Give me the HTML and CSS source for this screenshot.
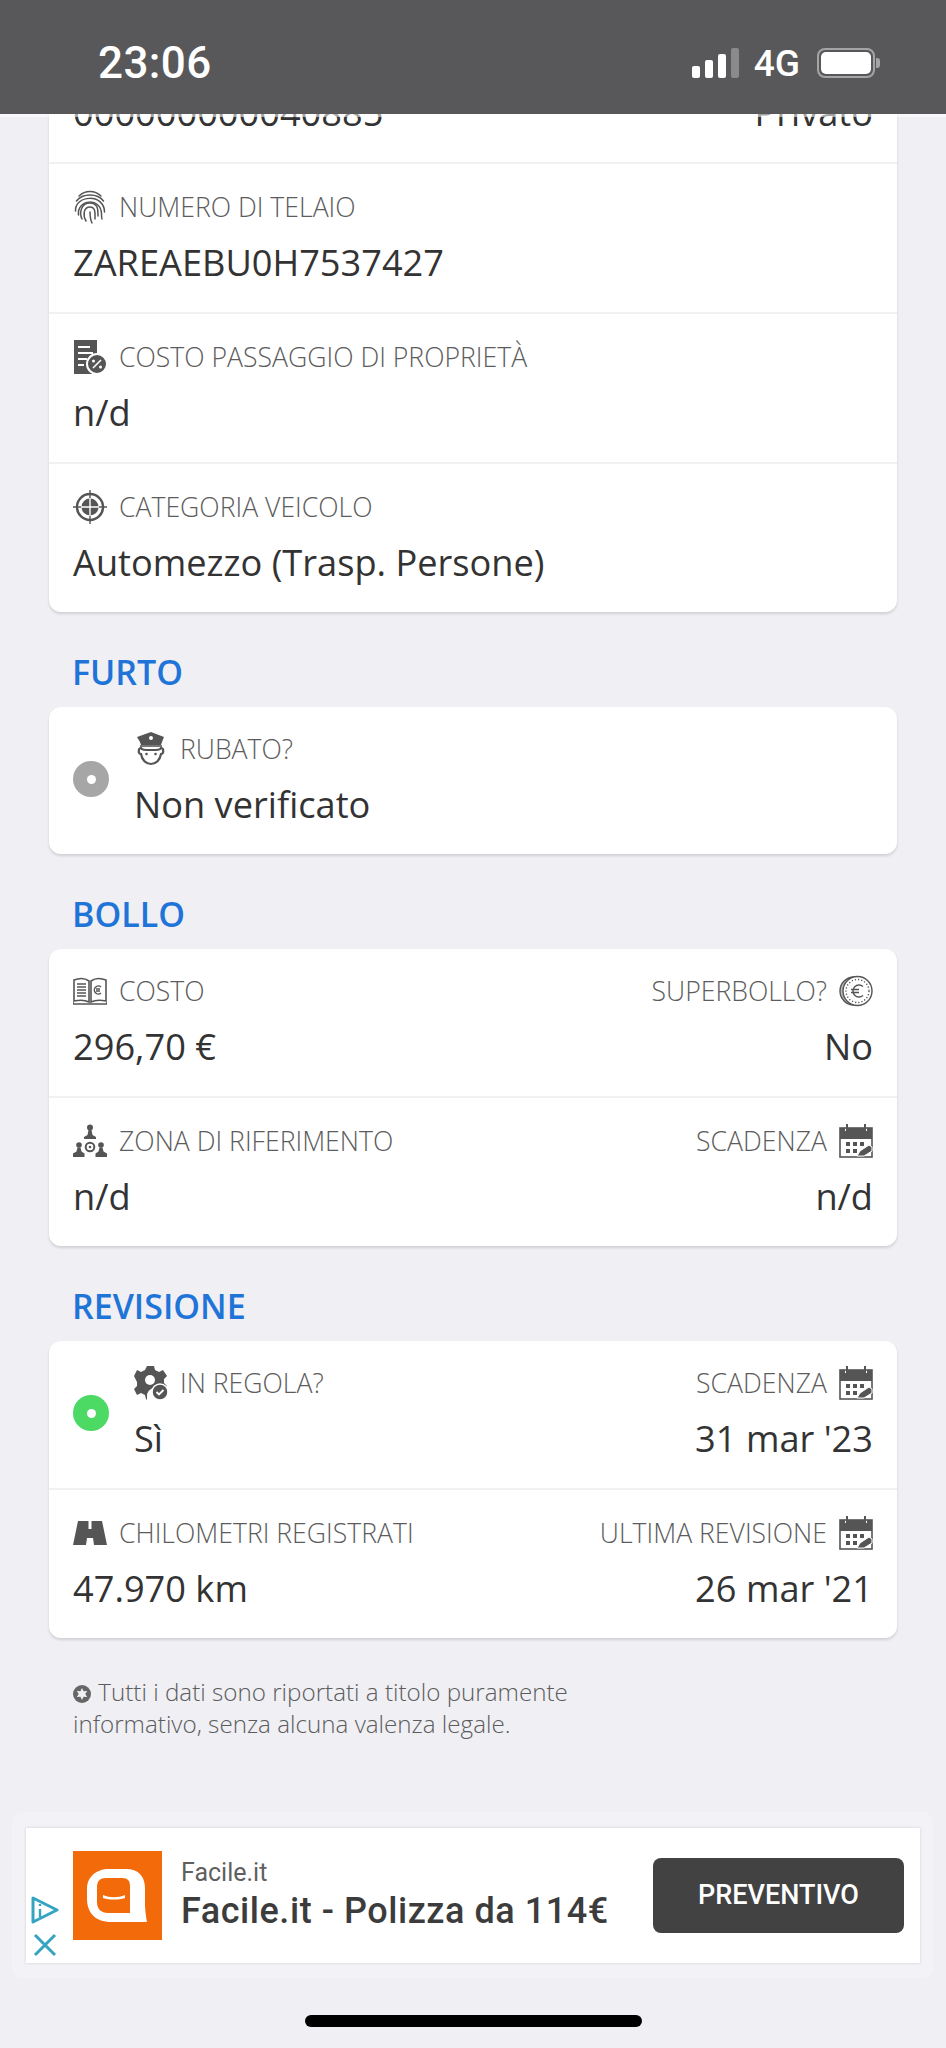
FILE: index.html
```html
<!DOCTYPE html>
<html lang="it">
<head>
<meta charset="utf-8">
<title>Dettagli veicolo</title>
<link rel="stylesheet" href="styles.css">
</head>
<body>
<svg class="defs" width="0" height="0" aria-hidden="true">
  <defs>
    <symbol id="cal" viewBox="0 0 34 34">
      <path d="M1 4h5v3h3V4h16v3h3V4h5v11H1z"/>
      <rect x="7" y="0" width="2" height="7"/><rect x="25" y="0" width="2" height="7"/>
      <rect x="1" y="4" width="32" height="29" fill="none" stroke="#555" stroke-width="1.6"/>
      <path d="M7 18h4v4H7zM14 18h4v4h-4zM21 18h4v4h-4zM7 25h4v4H7zM14 25h4v4h-4z"/>
      <path d="M18 32l3-5 9-6 3 2v4l-8 5z" fill="#555" stroke="#fff" stroke-width="1"/>
    </symbol>
  </defs>
</svg>

<header class="status">
  <span class="time">23:06</span>
  <div class="status-right">
    <div class="signal"><i class="b1"></i><i class="b2"></i><i class="b3"></i><i class="b4"></i></div>
    <span class="net">4G</span>
    <div class="battery"><i></i></div>
  </div>
</header>

<main class="page">
  <section class="card">
    <div class="row">
      <div class="cols">
        <div class="field"><div class="label">&nbsp;</div><div class="value">000000000040885</div></div>
        <div class="field end"><div class="label">&nbsp;</div><div class="value">Privato</div></div>
      </div>
    </div>
    <div class="row">
      <div class="field">
        <div class="label">
          <svg class="ico" viewBox="0 0 34 34"><g fill="none" stroke="#555" stroke-width="1.5" stroke-linecap="round"><path d="M6 6c6-6 16-6 22 0"/><path d="M3.500 11c6-8 21-8 27 0"/><path d="M2.500 21c-1-16 29-18 29 1"/><path d="M5.500 25c-2-16 23-18 23-1 0 3 0 4 .5 5"/><path d="M9 29c-3-6-1-16 8-16 9 0 8 9 8 13"/><path d="M13 31c-3-5-3-14 4-14 6 0 5 7 5 12"/><path d="M17 22c0 4 .5 8 2 11"/></g></svg>
          <span>NUMERO DI TELAIO</span>
        </div>
        <div class="value">ZAREAEBU0H7537427</div>
      </div>
    </div>
    <div class="row">
      <div class="field">
        <div class="label">
          <svg class="ico" viewBox="0 0 34 34"><path d="M1 0h23v34H1z"/><path d="M5 6h12v2H5zM5 12h15v2H5zM5 18h9v2H5zM5 24h6v2H5z" fill="#fff"/><circle cx="24" cy="24" r="10" fill="#555" stroke="#fff" stroke-width="2"/><path d="M20 28l8-8" stroke="#fff" stroke-width="1.600"/><circle cx="20.500" cy="21" r="1.500" fill="#fff"/><circle cx="27.500" cy="27" r="1.500" fill="#fff"/></svg>
          <span>COSTO PASSAGGIO DI PROPRIETÀ</span>
        </div>
        <div class="value">n/d</div>
      </div>
    </div>
    <div class="row">
      <div class="field">
        <div class="label">
          <svg class="ico" viewBox="0 0 34 34"><circle cx="17" cy="17" r="13" fill="none" stroke="#555" stroke-width="2.400"/><circle cx="17" cy="17" r="8.500"/><path d="M17 0v34M0 17h34" stroke="#555" stroke-width="1.400"/><path d="M17 8v18M8 17h18" stroke="#fff" stroke-width="1.400"/></svg>
          <span>CATEGORIA VEICOLO</span>
        </div>
        <div class="value">Automezzo (Trasp. Persone)</div>
      </div>
    </div>
  </section>

  <h2 class="title">FURTO</h2>
  <section class="card">
    <div class="row">
      <span class="dot grey"></span>
      <div class="field">
        <div class="label">
          <svg class="ico" viewBox="0 0 34 34"><path d="M17 0l13 5-2 5-1 3H7L6 10 3 5z"/><circle cx="17" cy="6" r="2" fill="#fff"/><path d="M6 14h22" stroke="#555" stroke-width="1.600"/><path d="M7 16c-3 0-3 6 0 6 1 6 5 10 10 10s9-4 10-10c3 0 3-6 0-6 -1 2-3 2-10 2s-9 0-10-2z" fill="none" stroke="#555" stroke-width="2.200"/><circle cx="12.500" cy="22" r="1.300"/><circle cx="21.500" cy="22" r="1.300"/></svg>
          <span>RUBATO?</span>
        </div>
        <div class="value">Non verificato</div>
      </div>
    </div>
  </section>

  <h2 class="title">BOLLO</h2>
  <section class="card">
    <div class="row">
      <div class="cols">
        <div class="field">
          <div class="label">
            <svg class="ico" viewBox="0 0 34 34"><path d="M1 6c5-2 11-2 15 1v21c-4-2-10-2-15-1zM18 7c4-3 10-3 15-1v21c-5-1-11-1-15 1z" fill="none" stroke="#555" stroke-width="1.600"/><path d="M4 10h9M4 13h9M4 16h9M4 19h9M4 22h9" stroke="#555" stroke-width="1.500"/><path d="M0 28v2h34v-2" fill="none" stroke="#555" stroke-width="1.600"/><path d="M28 13a4 4 0 1 0 0 6M23 15h4M23 17h4" fill="none" stroke="#555" stroke-width="1.500"/></svg>
            <span>COSTO</span>
          </div>
          <div class="value">296,70 €</div>
        </div>
        <div class="field end">
          <div class="label">
            <span>SUPERBOLLO?</span>
            <svg class="ico" viewBox="0 0 34 34"><circle cx="15" cy="17" r="14" fill="#bbb" stroke="#555" stroke-width="1.400"/><circle cx="18.500" cy="17" r="14.500" fill="#fff" stroke="#555" stroke-width="1.400"/><circle cx="18.500" cy="17" r="11.500" fill="none" stroke="#555" stroke-width="1.400" stroke-dasharray="1.200 2"/><path d="M24 12.500a6 6 0 1 0 0 9M12 15.500h8M12 18.500h8" fill="none" stroke="#555" stroke-width="1.400"/></svg>
          </div>
          <div class="value">No</div>
        </div>
      </div>
    </div>
    <div class="row">
      <div class="cols">
        <div class="field">
          <div class="label">
            <svg class="ico" viewBox="0 0 34 34"><circle cx="17" cy="3.500" r="3"/><path d="M15.500 6h3l1 5 3.500 2v2H11v-2l3.500-2z"/><circle cx="6" cy="21" r="2.800"/><path d="M4.500 23.500h3l1 4 3 2V33H0v-3.500l3.500-2z"/><circle cx="28" cy="21" r="2.800"/><path d="M26.500 23.500h3l1 4 3.500 2V33H22.500v-3.500l3-2z"/><circle cx="17" cy="23" r="4.300" fill="none" stroke="#555" stroke-width="2"/><circle cx="17" cy="23" r="1.300"/></svg>
            <span>ZONA DI RIFERIMENTO</span>
          </div>
          <div class="value">n/d</div>
        </div>
        <div class="field end">
          <div class="label">
            <span>SCADENZA</span>
            <svg class="ico"><use href="#cal"/></svg>
          </div>
          <div class="value">n/d</div>
        </div>
      </div>
    </div>
  </section>

  <h2 class="title">REVISIONE</h2>
  <section class="card">
    <div class="row">
      <span class="dot green"></span>
      <div class="cols">
        <div class="field">
          <div class="label">
            <svg class="ico" viewBox="0 0 34 34"><path d="M13 0h7l1 4 4 2 4-2 4 6-3 3v4l3 3-1 2H20a8 8 0 0 0-7 9v3l-1-1-1-4-4-2-4 2-3-6 3-3v-4L0 10l3-6 4 2 4-2z"/><circle cx="16" cy="14" r="5" fill="#fff"/><circle cx="26" cy="26" r="8" fill="#555" stroke="#fff" stroke-width="1.500"/><path d="M22.500 26l2.500 2.500 4.500-4.500" fill="none" stroke="#fff" stroke-width="1.800"/></svg>
            <span>IN REGOLA?</span>
          </div>
          <div class="value">Sì</div>
        </div>
        <div class="field end">
          <div class="label">
            <span>SCADENZA</span>
            <svg class="ico"><use href="#cal"/></svg>
          </div>
          <div class="value">31 mar '23</div>
        </div>
      </div>
    </div>
    <div class="row">
      <div class="cols">
        <div class="field">
          <div class="label">
            <svg class="ico" viewBox="0 0 34 34"><path d="M5 5h24l5 24H21l-1-7h-6l-1 7H0z"/><path d="M17 5v8" stroke="#fff" stroke-width="3"/></svg>
            <span>CHILOMETRI REGISTRATI</span>
          </div>
          <div class="value">47.970 km</div>
        </div>
        <div class="field end">
          <div class="label">
            <span>ULTIMA REVISIONE</span>
            <svg class="ico"><use href="#cal"/></svg>
          </div>
          <div class="value">26 mar '21</div>
        </div>
      </div>
    </div>
  </section>

  <p class="note">
    <svg class="note-ico" viewBox="0 0 18 18"><circle cx="9" cy="9" r="9" fill="#666"/><path d="M9 3l1.600 3.200 3.600-.2-1.900 3 1.900 3-3.600-.2L9 15l-1.600-3.200-3.600.2 1.900-3-1.900-3 3.600.2z" fill="#efeff4"/></svg>
    Tutti i dati sono riportati a titolo puramente<br>informativo, senza alcuna valenza legale.
  </p>

  <aside class="ad-wrap">
    <div class="ad">
      <div class="ad-choice">
        <svg class="ad-tri" viewBox="0 0 28 28"><path d="M2 2l24 12L2 26z" fill="none" stroke="#35a4c0" stroke-width="3" stroke-linejoin="round"/><path d="M9 13v8M9 8v2" stroke="#35a4c0" stroke-width="2.400"/></svg>
        <svg class="ad-x" viewBox="0 0 24 24"><path d="M2 2l20 20M22 2L2 22" stroke="#35a4c0" stroke-width="3"/></svg>
      </div>
      <svg class="ad-logo" viewBox="0 0 89 89"><rect width="89" height="89" fill="#f26a0a"/><path d="M36 18h17c12 0 19 7 19 19v15c0 6 1 14 2 19H38C23 71 14 62 14 48V38c0-12 9-20 22-20z" fill="#fff"/><path d="M33 27h16c6 0 8 3 8 8v27H35c-7 0-11-4-11-11V36c0-6 3-9 9-9z" fill="#f26a0a"/><path d="M30 44c7 3 15 3 22 0v3c-7 2-15 2-22 0z" fill="#fff"/></svg>
      <div class="ad-text">
        <div class="ad-brand">Facile.it</div>
        <div class="ad-head">Facile.it - Polizza da 114€</div>
      </div>
      <div class="ad-btn">PREVENTIVO</div>
    </div>
  </aside>

  <div class="home"></div>
</main>
</body>
</html>
```
FILE: styles.css
```css
* { box-sizing: border-box; }
html, body { margin: 0; padding: 0; }
body {
  width: 946px;
  height: 2048px;
  overflow: hidden;
  position: relative;
  background: #efeff4;
  font-family: "Open Sans", "Liberation Sans", sans-serif;
  color: #333;
}
.defs { position: absolute; }

.status {
  position: absolute;
  top: 0; left: 0; right: 0;
  height: 117px;
  padding: 12px 71px 0 98px;
  background: #58585a;
  background-clip: padding-box;
  border-bottom: 3px solid rgba(255, 255, 255, .55);
  display: flex;
  align-items: center;
  justify-content: space-between;
  color: #fff;
  z-index: 2;
}
.time { font: 500 44px/1 Roboto, sans-serif; letter-spacing: .4px; }
.status-right { display: flex; align-items: center; }
.signal { display: flex; align-items: flex-end; gap: 5px; height: 30px; }
.signal i { width: 8px; border-radius: 2px; background: #fff; display: block; }
.signal .b1 { height: 12px; }
.signal .b2 { height: 18px; }
.signal .b3 { height: 24px; }
.signal .b4 { height: 30px; background: #8a8a8c; }
.net { font: 500 37px/1 Roboto, sans-serif; margin: 0 17px 0 15px; }
.battery {
  width: 58px; height: 30px;
  border: 2px solid #a4a4a6;
  border-radius: 8px;
  padding: 2px;
  position: relative;
}
.battery i { display: block; height: 100%; background: #fff; border-radius: 5px; }
.battery::after {
  content: "";
  position: absolute;
  right: -7px; top: 8px;
  width: 4px; height: 10px;
  background: #a4a4a6;
  border-radius: 0 3px 3px 0;
}

.page { padding-top: 15px; }

.card {
  margin: 0 49px;
  background: #fff;
  border-radius: 12px;
  box-shadow: 0 2px 3px rgba(0, 0, 0, .13);
}
.row {
  display: flex;
  align-items: center;
  gap: 25px;
  padding: 25px 24px 27px;
  border-bottom: 2px solid #f1f1f4;
}
.row:first-child { padding-top: 24px; }
.row:last-child { border-bottom: 0; }
.cols { flex: 1; display: flex; justify-content: space-between; }
.field { display: flex; flex-direction: column; gap: 14px; }
.field.end { align-items: flex-end; }
.label {
  display: flex;
  align-items: center;
  gap: 12px;
  height: 36px;
  font-size: 26.6px;
  font-weight: 300;
  color: #5c5c5c;
  white-space: nowrap;
}
.ico { width: 34px; height: 34px; flex: none; fill: #555; }
.value { font-size: 36.2px; line-height: 46px; color: #333; white-space: nowrap; }

.dot {
  flex: none;
  width: 36px; height: 36px;
  border-radius: 50%;
  display: flex;
  align-items: center;
  justify-content: center;
}
.dot::after { content: ""; width: 9px; height: 9px; border-radius: 50%; background: #fff; }
.dot.grey { background: #a6a6a6; }
.dot.green { background: #4cd964; }

.title {
  margin: 40px 24px 15px 72px;
  font-size: 34px;
  line-height: 40px;
  font-weight: 600;
  color: #1f74d8;
}

.note {
  margin: 38px 73px 0;
  font-size: 24.2px;
  line-height: 32px;
  font-weight: 300;
  color: #5c5c5c;
}
.note-ico { width: 18px; height: 18px; vertical-align: -2px; margin-right: 1px; }

.ad-wrap {
  margin: 72px 13px 0 12px;
  padding: 16px 13px 15px 14px;
  background: #f3f3f7;
  border-radius: 10px;
}
.ad {
  height: 135px;
  padding: 0 16px 0 5px;
  background: #fff;
  box-shadow: 0 0 3px rgba(0, 0, 0, .14);
  display: flex;
  align-items: center;
  gap: 14px;
}
.ad-choice {
  flex: none;
  width: 28px;
  align-self: flex-end;
  padding-bottom: 6px;
  display: flex;
  flex-direction: column;
  align-items: center;
  gap: 9px;
}
.ad-tri { width: 28px; height: 28px; }
.ad-x { width: 24px; height: 24px; }
.ad-logo { width: 89px; height: 89px; flex: none; }
.ad-text { flex: 1; margin-left: 5px; font-family: Roboto, sans-serif; }
.ad-brand { font-size: 25px; line-height: 30px; color: #5f5f5f; }
.ad-head { font-size: 36px; line-height: 46px; font-weight: 500; letter-spacing: .55px; color: #3c3c3c; white-space: nowrap; }
.ad-btn {
  flex: none;
  width: 251px; height: 75px;
  border-radius: 8px;
  background: #424242;
  color: #fff;
  font: 500 27px/75px Roboto, sans-serif;
  text-align: center;
}

.home {
  width: 337px; height: 12px;
  margin: 37px auto 0;
  background: #000;
  border-radius: 6px;
}
```
